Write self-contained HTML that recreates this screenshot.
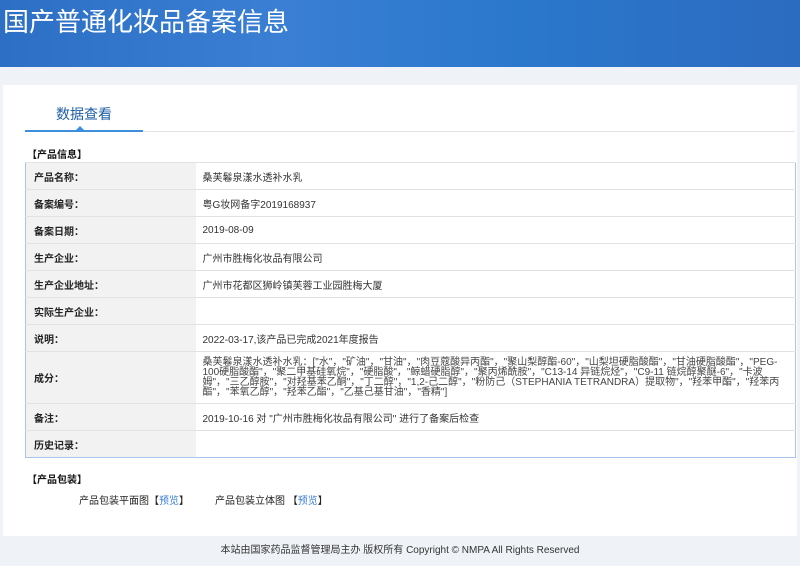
<!DOCTYPE html>
<html><head><meta charset="utf-8"><style>
*{margin:0;padding:0;box-sizing:border-box}
body{width:800px;height:566px;overflow:hidden;background:#eff3f7;font-family:"Liberation Sans","Noto Sans CJK SC",sans-serif;position:relative}
.hd{position:absolute;left:0;top:0;width:800px;height:67px;background:linear-gradient(90deg,#2c6fc4 0%,#3a7fd4 35%,#2a78cc 65%,#2c6bc0 100%)}
.hd h1{position:absolute;left:3px;top:2px;font-size:26px;font-weight:normal;color:#fff;letter-spacing:0}
.panel{position:absolute;left:3px;top:85px;width:794px;height:451px;background:#fff}
.tab{position:absolute;left:56px;top:104px;font-size:14px;color:#1d5ea6}
.line{position:absolute;left:25px;top:131px;width:770px;height:1px;background:#e3e3e3}
.line2{position:absolute;left:25px;top:130px;width:118px;height:2px;background:#3b8fdd}
.tri{position:absolute;left:76px;top:126px;width:0;height:0;border-left:4px solid transparent;border-right:4px solid transparent;border-bottom:4px solid #3b8fdd}
.sec{position:absolute;left:27px;font-size:10px;line-height:11px;font-weight:bold;color:#111;z-index:2}
table{position:absolute;left:25px;top:162px;width:771px;border-collapse:collapse;border:1px solid #a9c4ea;font-size:10px;color:#333}
td{border-top:1px solid #e2e2e2;height:27px;vertical-align:middle}
td.l{width:170px;background:#f2f2f2;padding-left:8px;font-weight:bold;color:#222}
td.v{padding-left:7px}
td.cf{font-size:10px;line-height:10px;padding:3px 7px;height:52px;color:#444}
.pk{position:absolute;top:492px;font-size:10px;color:#222}
.pk a{color:#3a7fd4;text-decoration:none}
.ft{position:absolute;left:0;top:541px;width:800px;text-align:center;font-size:10px;color:#333}
</style></head><body>
<div class="hd"><h1>国产普通化妆品备案信息</h1></div>
<div class="panel"></div>
<div class="tab">数据查看</div>
<div class="line"></div><div class="line2"></div><div class="tri"></div>
<div class="sec" style="top:150px">【产品信息】</div>
<table>
<tr><td class="l">产品名称：</td><td class="v">桑芙鬈泉漾水透补水乳</td></tr>
<tr><td class="l">备案编号：</td><td class="v">粤G妆网备字2019168937</td></tr>
<tr><td class="l">备案日期：</td><td class="v">2019-08-09</td></tr>
<tr><td class="l">生产企业：</td><td class="v">广州市胜梅化妆品有限公司</td></tr>
<tr><td class="l">生产企业地址：</td><td class="v">广州市花都区狮岭镇芙蓉工业园胜梅大厦</td></tr>
<tr><td class="l">实际生产企业：</td><td class="v"></td></tr>
<tr><td class="l">说明：</td><td class="v">2022-03-17,该产品已完成2021年度报告</td></tr>
<tr><td class="l">成分：</td><td class="v cf">桑芙鬈泉漾水透补水乳：["水"，"矿油"，"甘油"，"肉豆蔻酸异丙酯"，"聚山梨醇酯-60"，"山梨坦硬脂酸酯"，"甘油硬脂酸酯"，"PEG-100硬脂酸酯"，"聚二甲基硅氧烷"，"硬脂酸"，"鲸蜡硬脂醇"，"聚丙烯酰胺"，"C13-14 异链烷烃"，"C9-11 链烷醇聚醚-6"，"卡波姆"，"三乙醇胺"，"对羟基苯乙酮"，"丁二醇"，"1,2-己二醇"，"粉防己（STEPHANIA TETRANDRA）提取物"，"羟苯甲酯"，"羟苯丙酯"，"苯氧乙醇"，"羟苯乙酯"，"乙基己基甘油"，"香精"]</td></tr>
<tr><td class="l">备注：</td><td class="v">2019-10-16 对 "广州市胜梅化妆品有限公司" 进行了备案后检查</td></tr>
<tr><td class="l">历史记录：</td><td class="v"></td></tr>
</table>
<div class="sec" style="top:475px">【产品包装】</div>
<div class="pk" style="left:79px">产品包装平面图【<a>预览</a>】</div>
<div class="pk" style="left:215px">产品包装立体图 【<a>预览</a>】</div>
<div class="ft">本站由国家药品监督管理局主办 版权所有 Copyright © NMPA All Rights Reserved</div>
</body></html>
